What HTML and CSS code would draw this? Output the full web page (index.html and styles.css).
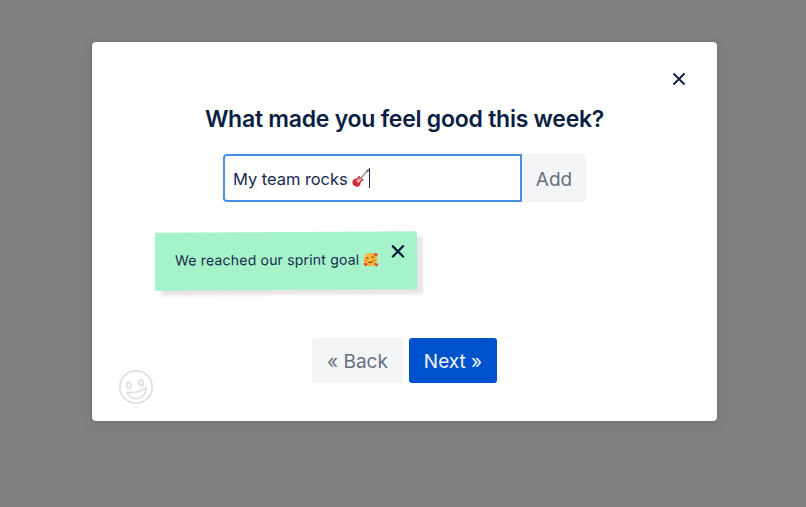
FILE: index.html
```html
<!DOCTYPE html>
<html lang="en">
<head>
  <meta charset="UTF-8">
  <title>Health check</title>
  <link rel="stylesheet" href="styles.css">
</head>
<body>

  <div class="modal">
    <button class="close" aria-label="Close">
      <svg width="14" height="14" viewBox="0 0 14 14"><path d="M1.5 1.5l11 11M12.5 1.5l-11 11"/></svg>
    </button>

    <h2>What made you feel good this week?</h2>

    <div class="entry">
      <div class="field">
        <span class="field-text">My team rocks</span>
        <svg class="guitar" width="18" height="19" viewBox="0 0 18 19">
          <path d="M8.5 9.5L15.5 2" stroke="#a99a98" stroke-width="1.6"/>
          <path d="M14.6 2.6L17 .8" stroke="#7d7472" stroke-width="2"/>
          <path d="M1.5 10.5c1.7-1.3 3-.6 3.8-1.3C6.2 8.4 6 7 7.3 6.9c1.2 0 .6 1.6 1.5 2.3.8.7 2.7.2 2.6 1.5-.1 1.3-1.9 1.1-2.5 2.1-.6 1 .1 2.4-1.2 3.7-1.6 1.7-4.2 1.6-5.8.1C.3 15.1-.1 12 1.5 10.5z" fill="#d52638"/>
          <path d="M4 11.7l3.7-3 1.8 1.7-3.3 3.5z" fill="#eed5d3"/>
          <path d="M4 13.5l5-5" stroke="#77535a" stroke-width=".8"/>
        </svg>
        <span class="caret"></span>
      </div>
      <button class="btn add">Add</button>
    </div>

    <div class="note">
      <span class="note-text">We reached our sprint goal</span>
      <svg class="face" width="16" height="16" viewBox="0 0 16 16">
        <circle cx="7.5" cy="8" r="6.8" fill="#fbb83a"/>
        <path d="M3.3 7q1-1.6 2.2-.2M8.5 6.3q1-1.6 2.3-.2" fill="none" stroke="#74401c" stroke-width="1"/>
        <path d="M5 10.3q2.8 1.8 5-.6" fill="none" stroke="#8b421c" stroke-width="1.1"/>
        <circle cx="3.2" cy="9.3" r="1.3" fill="#f58a35"/>
        <circle cx="11.5" cy="8.5" r="1.3" fill="#f58a35"/>
        <path class="heart" d="M13 5.3l-2.2-2.2c-.8-1.3 1.1-2.3 1.9-.9 1-1.3 2.9-.2 2.1 1.1z"/>
        <path class="heart" d="M2.8 15l-2.1-2.2c-.7-1.3 1-2.1 1.8-.8.9-1.2 2.7-.2 1.9 1z"/>
        <path class="heart" d="M13.5 15.2l-2.1-2.2c-.7-1.3 1-2.1 1.8-.8.9-1.2 2.7-.2 1.9 1z"/>
      </svg>
      <button class="remove" aria-label="Remove">
        <svg width="14" height="14" viewBox="0 0 14 14"><path d="M1.2 1.2l11.6 11.6M12.8 1.2L1.2 12.8"/></svg>
      </button>
    </div>

    <div class="actions">
      <button class="btn back">« Back</button>
      <button class="btn next">Next »</button>
    </div>

    <svg class="smiley" width="36" height="36" viewBox="0 0 36 36">
      <circle cx="18" cy="18" r="16.2"/>
      <ellipse cx="10.8" cy="16.5" rx="2.1" ry="2.9" transform="rotate(-10 10.8 16.5)"/>
      <ellipse cx="23" cy="13.7" rx="2.1" ry="2.9" transform="rotate(-10 23 13.7)"/>
      <path d="M9 23.5q10.500 1 19-4.500c.5 5.500-3 9.800-8 10.500-5 .7-9.500-1.500-11-6z"/>
    </svg>
  </div>

</body>
</html>
```
FILE: styles.css
```css
* {
  box-sizing: border-box;
}
body {
  margin: 0;
  height: 507px;
  padding: 42px 0 0 92px;
  overflow: hidden;
  background: #808080;
  font-family: Inter, "Liberation Sans", sans-serif;
  color: #172b4d;
}
button {
  border: none;
  padding: 0;
  background: none;
  font-family: inherit;
  cursor: pointer;
}
svg {
  display: block;
  flex: none;
}
.modal {
  position: relative;
  display: flex;
  flex-direction: column;
  align-items: center;
  width: 625px;
  height: 379px;
  padding-top: 62px;
  background: #fff;
  border-radius: 4px;
  box-shadow: 0 0 2px rgba(9, 30, 66, 0.3), 0 5px 16px rgba(9, 30, 66, 0.08);
}
.close {
  position: absolute;
  top: 30px;
  right: 31px;
}
.close path {
  stroke: #091e42;
  stroke-width: 1.8;
}
h2 {
  margin: 0;
  line-height: 30px;
  font-size: 23px;
  font-weight: 600;
  letter-spacing: -0.25px;
  color: #091e42;
  white-space: nowrap;
}
.entry {
  display: flex;
  margin-top: 20px;
}
.field {
  display: flex;
  align-items: center;
  width: 299px;
  height: 48px;
  padding: 2px 0 0 8px;
  border: 2px solid #4a90e2;
  border-radius: 4px 0 0 4px;
  font-size: 16.5px;
  letter-spacing: -0.05px;
  white-space: nowrap;
}
.guitar {
  margin: -2px 0 0 4px;
}
.caret {
  width: 1px;
  height: 20px;
  margin: -2px 0 0 -1px;
  background: #172b4d;
}
.btn {
  padding-top: 2px;
  border-radius: 3px;
  font-size: 19px;
  white-space: nowrap;
}
.add {
  width: 64px;
  height: 48px;
  background: #f4f5f7;
  color: #667080;
}
.note {
  position: relative;
  display: flex;
  align-items: center;
  align-self: flex-start;
  width: 262px;
  height: 58px;
  margin: 30px 0 0 63px;
  padding: 0 0 3px 20px;
  background: #a5f2cb;
  box-shadow: 6px 5px 3px rgba(60, 30, 30, 0.11);
  font-size: 14px;
  letter-spacing: 0.2px;
  white-space: nowrap;
  transform: rotate(-0.3deg);
}
.face {
  margin-left: 4px;
}
.heart {
  fill: #ea4537;
}
.remove {
  position: absolute;
  top: 13px;
  right: 12px;
}
.remove path {
  stroke: #091e42;
  stroke-width: 2.2;
}
.actions {
  display: flex;
  gap: 6px;
  margin-top: 48px;
}
.back {
  width: 91px;
  height: 45px;
  background: #f4f5f7;
  color: #667080;
}
.next {
  width: 88px;
  height: 45px;
  background: #0052cc;
  color: #f0f6ff;
}
.smiley {
  position: absolute;
  left: 26px;
  bottom: 16px;
  fill: none;
  stroke: #dfdfdf;
  stroke-width: 1.7;
}
```
